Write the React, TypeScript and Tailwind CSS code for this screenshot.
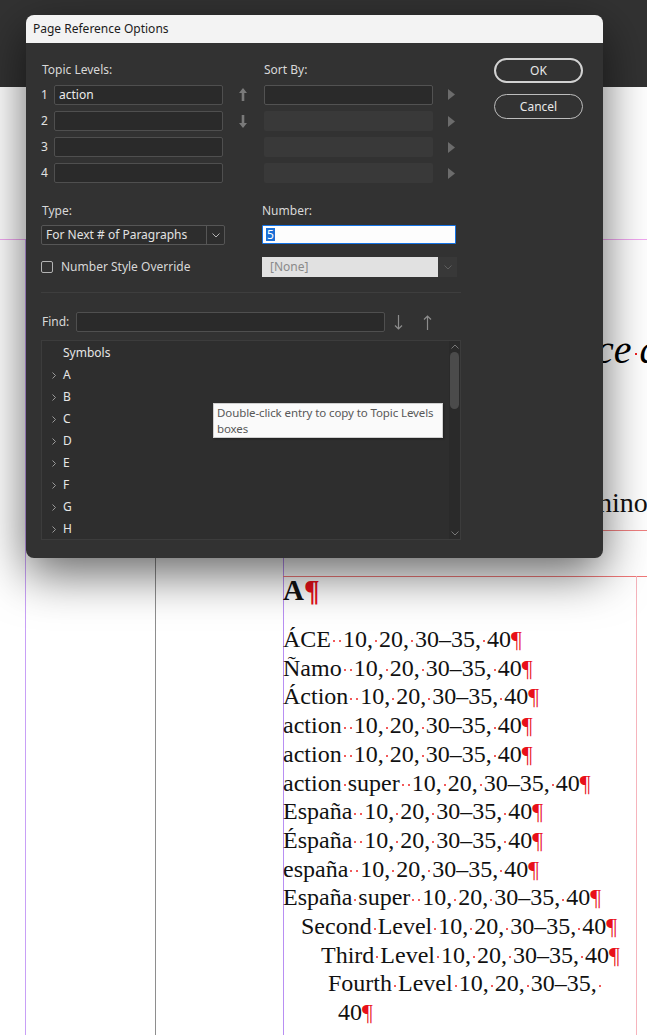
import type { ReactNode } from "react"

const ENTRIES: { text: string; indent: number }[] = [
  { text: "ÁCE··10,·20,·30–35,·40¶", indent: 0 },
  { text: "Ñamo··10,·20,·30–35,·40¶", indent: 0 },
  { text: "Áction··10,·20,·30–35,·40¶", indent: 0 },
  { text: "action··10,·20,·30–35,·40¶", indent: 0 },
  { text: "action··10,·20,·30–35,·40¶", indent: 0 },
  { text: "action·super··10,·20,·30–35,·40¶", indent: 0 },
  { text: "España··10,·20,·30–35,·40¶", indent: 0 },
  { text: "Éspaña··10,·20,·30–35,·40¶", indent: 0 },
  { text: "españa··10,·20,·30–35,·40¶", indent: 0 },
  { text: "España·super··10,·20,·30–35,·40¶", indent: 0 },
  { text: "Second·Level·10,·20,·30–35,·40¶", indent: 1 },
  { text: "Third·Level·10,·20,·30–35,·40¶", indent: 2 },
  { text: "Fourth·Level·10,·20,·30–35,·", indent: 3 },
  { text: "40¶", indent: 4 },
]

const INDENTS = ["pl-0", "pl-[18px]", "pl-[38px]", "pl-[45px]", "pl-[55px]"]

const LETTERS = ["A", "B", "C", "D", "E", "F", "G", "H"]

// hidden characters: spaces become small red dots, paragraph ends a red pilcrow
function Hidden({ text }: { text: string }) {
  const out: ReactNode[] = []
  let buf = ""
  const flush = () => {
    if (buf) out.push(buf)
    buf = ""
  }
  ;[...text].forEach((ch, i) => {
    if (ch === "·") {
      flush()
      out.push(<span key={i} className="mx-[2px] inline-block h-[2px] w-[2px] bg-[#f25a5a] align-middle" />)
    } else if (ch === "¶") {
      flush()
      out.push(<span key={i} className="text-[#e8101a]">¶</span>)
    } else buf += ch
  })
  flush()
  return <>{out}</>
}

function UpArrow({ down = false }: { down?: boolean }) {
  return (
    <svg width="8" height="13" viewBox="0 0 8 13" className={down ? "rotate-180" : ""}>
      <path d="M4 0 L8 5 H5.3 V13 H2.7 V5 H0 Z" fill="#7a7a7a" />
    </svg>
  )
}

function Tri() {
  return (
    <svg width="7" height="11" viewBox="0 0 7 11">
      <path d="M0 0 L7 5.5 L0 11 Z" fill="#6c6c6c" />
    </svg>
  )
}

function Chevron({ color, dir = "down" }: { color: string; dir?: "down" | "up" }) {
  return (
    <svg width="8" height="5" viewBox="0 0 8 5">
      <path d={dir === "down" ? "M0.5 0.5 L4 4 L7.5 0.5" : "M0.5 4.5 L4 1 L7.5 4.5"} fill="none" stroke={color} strokeWidth="1" />
    </svg>
  )
}

function ThinArrow({ up = false }: { up?: boolean }) {
  return (
    <svg width="9" height="15" viewBox="0 0 9 15">
      <path
        d={up ? "M4.5 15 V1 M1 4.5 L4.5 1 L8 4.5" : "M4.5 0 V14 M1 10.5 L4.5 14 L8 10.5"}
        fill="none"
        stroke="#8c8c8c"
        strokeWidth="1.2"
      />
    </svg>
  )
}

function Dialog() {
  return (
    <div className="absolute left-[26px] top-[15px] h-[543px] w-[577px] overflow-hidden rounded-[8px] bg-[#323232] font-['Noto_Sans',sans-serif] text-[12px] shadow-[0_16px_48px_rgba(0,0,0,0.6)]">
      <div className="flex h-[28px] items-center bg-[#f3f3f3] pl-[7px] text-[#1b1b1b]">Page Reference Options</div>

      <div className="flex pl-[15px] pr-[20px] pt-[15px]">
        <div className="w-[420px] pt-[4px] text-[#d8d8d8]">
          <div className="grid grid-cols-[13px_169px_41px_169px_28px] items-center gap-y-[6px]">
            <div className="col-span-3 h-[16px] pl-px leading-[16px]">Topic Levels:</div>
            <div className="col-span-2 h-[16px] leading-[16px]">Sort By:</div>

            {[1, 2, 3, 4].map((n) => (
              <div key={n} className="contents">
                <span className={`text-[#e2e2e2] ${n === 1 ? "mt-px" : ""}`}>{n}</span>
                <div className={`h-[20px] rounded-[2px] border border-[#4f4f4f] bg-[#2a2a2a] pl-[4px] leading-[18px] text-[#ececec] ${n === 1 ? "mt-px" : ""}`}>
                  {n === 1 ? "action" : ""}
                </div>
                <div className="flex justify-center pr-[2px]">
                  {n === 1 && <UpArrow />}
                  {n === 2 && <UpArrow down />}
                </div>
                {n === 1 ? (
                  <div className="mt-px h-[20px] rounded-[2px] border border-[#525252] bg-[#2a2a2a]" />
                ) : (
                  <div className="h-[20px] rounded-[2px] bg-[#393939]" />
                )}
                <div className="flex pl-[15px]">
                  <Tri />
                </div>
              </div>
            ))}
          </div>

          <div className="mt-[20px] grid grid-cols-[184px_194px] gap-x-[37px]">
            <div className="h-[16px] pl-px leading-[16px]">Type:</div>
            <div className="h-[16px] leading-[16px]">Number:</div>

            <div className="mt-[6px] flex h-[20px] rounded-[2px] border border-[#565656] bg-[#2d2d2d] text-[#e2e2e2]">
              <span className="flex-1 pl-[4px] leading-[18px]">For Next # of Paragraphs</span>
              <span className="flex w-[18px] items-center justify-center border-l border-[#565656]">
                <Chevron color="#b4b4b4" />
              </span>
            </div>
            <div className="mt-[6px] flex h-[19px] items-center rounded-[1px] border border-[#1473e6] bg-[#fdfdfd] pl-[3px]">
              <span className="bg-[#1a6fd6] px-px leading-[13px] text-white">5</span>
            </div>

            <div className="mt-[12px] flex h-[20px] items-center gap-[8px]">
              <span className="h-[12px] w-[12px] rounded-[2px] border border-[#b3b3b3]" />
              <span>Number Style Override</span>
            </div>
            <div className="mt-[12px] flex h-[20px] w-[195px]">
              <span className="w-[176px] bg-[#e1e1e1] pl-[8px] leading-[20px] text-[#8a8a8a]">[None]</span>
              <span className="flex flex-1 items-center justify-center bg-[#383838]">
                <Chevron color="#5e5e5e" />
              </span>
            </div>
          </div>

          <div className="mt-[15px] h-px bg-[#3e3e3e]" />

          <div className="mt-[19px] flex h-[20px] items-center">
            <span className="w-[35px] pl-px">Find:</span>
            <div className="h-[20px] w-[309px] rounded-[2px] border border-[#4f4f4f] bg-[#2a2a2a]" />
            <span className="ml-[9px] flex">
              <ThinArrow />
            </span>
            <span className="ml-[20px] flex">
              <ThinArrow up />
            </span>
          </div>

          <div className="relative mt-[8px] flex h-[200px] border border-[#3c3c3c] bg-[#2e2e2e]">
            <div className="flex-1 pt-px text-[#e6e6e6]">
              <div className="h-[22px] pl-[21px] leading-[22px]">Symbols</div>
              {LETTERS.map((l) => (
                <div key={l} className="flex h-[22px] items-center">
                  <span className="flex w-[21px] pl-[10px]">
                    <svg width="4" height="7" viewBox="0 0 4 7">
                      <path d="M0.5 0.5 L3.5 3.5 L0.5 6.5" fill="none" stroke="#9a9a9a" strokeWidth="1" />
                    </svg>
                  </span>
                  <span>{l}</span>
                </div>
              ))}
            </div>
            <div className="flex w-[11px] flex-col items-center bg-[#2a2a2a] py-[3px]">
              <Chevron color="#777777" dir="up" />
              <div className="mt-[3px] h-[57px] w-[9px] rounded-full bg-[#4b4b4b]" />
              <div className="flex-1" />
              <Chevron color="#777777" />
            </div>

            <div className="absolute left-[171px] top-[62px] h-[35px] w-[230px] whitespace-nowrap border border-[#cfcfcf] bg-[#fafafa] px-[3px] pt-[1px] text-[11.5px] leading-[16px] tracking-[-0.1px] text-[#585858] shadow-[1px_1px_2px_rgba(0,0,0,0.3)]">
              Double-click entry to copy to Topic Levels
              <br />
              boxes
            </div>
          </div>
        </div>

        <div className="ml-[33px] flex w-[89px] flex-col gap-[11px] text-[#e8e8e8]">
          <button className="h-[25px] rounded-full border-2 border-[#d2d2d2] leading-[21px]">OK</button>
          <button className="h-[25px] rounded-full border-[1.5px] border-[#bdbdbd] leading-[22px]">Cancel</button>
        </div>
      </div>
    </div>
  )
}

export default function App() {
  return (
    <div className="relative h-[1035px] w-[647px] overflow-hidden bg-white font-['Liberation_Serif',serif]">
      <div className="h-[87px] bg-[#323232]" />

      {/* page guides */}
      <div className="absolute left-0 right-0 top-[239px] h-px bg-[#f2a8f2]" />
      <div className="absolute bottom-0 left-[25px] top-[239px] w-px bg-[#c8a0f6]" />
      <div className="absolute bottom-0 left-[155px] top-[240px] w-px bg-[#8e8e8e]" />
      <div className="absolute bottom-0 left-[283px] top-[240px] w-px bg-[#b88ff3]" />
      <div className="absolute left-[283px] right-0 top-[576px] h-px bg-[#f07878]" />
      <div className="absolute bottom-0 left-[636px] top-[576px] w-px bg-[#f6b4bc]" />
      <div className="absolute left-[540px] right-0 top-[530px] h-px bg-[#f08080]" />

      <div className="absolute left-[596px] top-[330px] whitespace-nowrap text-[40px] italic leading-none text-black">
        ce<span className="mx-[3px] inline-block h-[2px] w-[2px] bg-[#f02020] align-middle" />ad
      </div>
      <div className="absolute left-[598px] top-[489px] whitespace-nowrap text-[28px] leading-none text-[#111]">hino</div>

      <div className="absolute left-[283px] top-[576px] w-[353px] text-[#111]">
        <div className="text-[29px] font-bold leading-[29px]">
          <Hidden text="A¶" />
        </div>
        <div className="mt-[20px] text-[24px] leading-[28.7px]">
          {ENTRIES.map((e, i) => (
            <div key={i} className={`whitespace-nowrap ${INDENTS[e.indent]}`}>
              <Hidden text={e.text} />
            </div>
          ))}
        </div>
      </div>

      <Dialog />
    </div>
  )
}
